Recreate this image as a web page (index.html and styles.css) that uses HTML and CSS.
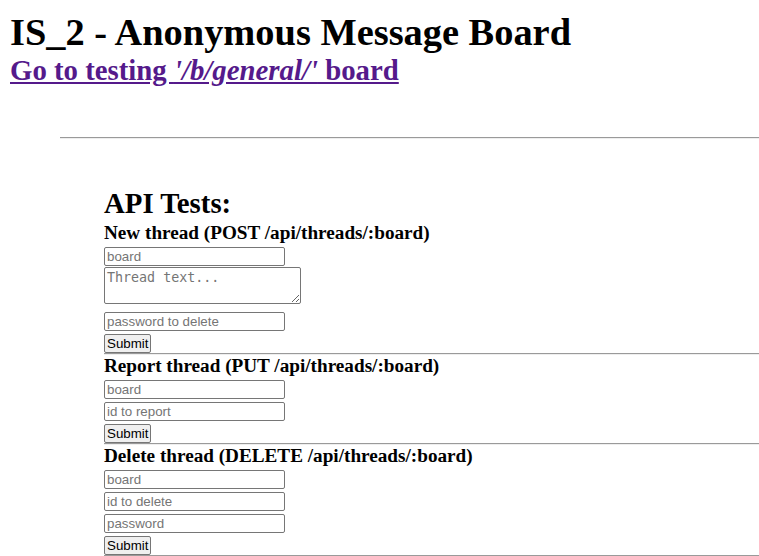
FILE: index.html
```html
<!DOCTYPE html>
<html>
<head>
<meta charset="utf-8">
<title>Anonymous Message Board</title>
<link rel="stylesheet" href="styles.css">
</head>
<body>
<header class="top">
  <h1 class="title">IS_2 - Anonymous Message Board</h1>
  <a class="board-link" href="#">Go to testing <i>'/b/general/'</i> board</a>
</header>
<hr class="divider">
<section class="tests">
  <h2 class="tests-title">API Tests:</h2>
  <h4 class="test-title">New thread (POST /api/threads/:board)</h4>
  <form class="test-form">
    <input class="field" type="text" placeholder="board">
    <textarea class="area" placeholder="Thread text..."></textarea>
    <input class="field field-gap" type="text" placeholder="password to delete">
    <input class="submit" type="submit" value="Submit">
  </form>
  <hr class="sep">
  <h4 class="test-title">Report thread (PUT /api/threads/:board)</h4>
  <form class="test-form">
    <input class="field" type="text" placeholder="board">
    <input class="field" type="text" placeholder="id to report">
    <input class="submit" type="submit" value="Submit">
  </form>
  <hr class="sep">
  <h4 class="test-title">Delete thread (DELETE /api/threads/:board)</h4>
  <form class="test-form">
    <input class="field" type="text" placeholder="board">
    <input class="field" type="text" placeholder="id to delete">
    <input class="field" type="text" placeholder="password">
    <input class="submit" type="submit" value="Submit">
  </form>
  <hr class="sep">
</section>
</body>
</html>
```
FILE: styles.css
```css
body {
  margin: 8px 0 8px 8px;
  font-family: "Liberation Serif", "Times New Roman", serif;
  color: #000;
  background: #fff;
}
.top {
  display: block;
  padding-left: 2px;
}
.title {
  margin: 2px 0 0 0;
  font-size: 38.4px;
  line-height: 44px;
  font-weight: bold;
}
.board-link {
  display: inline-block;
  font-size: 28.8px;
  line-height: 33px;
  font-weight: bold;
  color: #551a8b;
  text-decoration: underline;
}
.divider {
  margin: 50px 0 0 52px;
  border: none;
  border-top: 1px solid #9a9a9a;
  border-bottom: 1px solid #eeeeee;
  height: 0;
}
.tests {
  margin: 0 0 0 96px;
}
.tests-title {
  margin: 48px 0 2px 0;
  font-size: 28.8px;
  line-height: 33px;
  font-weight: bold;
}
.test-title {
  margin: 0;
  font-size: 19.2px;
  line-height: 22px;
  font-weight: bold;
}
.test-form {
  margin: 0;
  display: flex;
  flex-direction: column;
  align-items: flex-start;
}
.field {
  box-sizing: border-box;
  width: 181px;
  height: 19px;
  margin: 3px 0 0 0;
  padding: 1px 2px;
  border: 1px solid #767676;
  border-radius: 2px;
  font-family: "Liberation Sans", Arial, sans-serif;
  font-size: 13.33px;
}
.field::placeholder,
.area::placeholder {
  color: #757575;
}
.field-gap {
  margin-top: 8px;
}
.area {
  box-sizing: border-box;
  width: 197px;
  height: 37px;
  margin: 1px 0 0 0;
  padding: 2px;
  border: 1px solid #767676;
  border-radius: 2px;
  font-family: "DejaVu Sans Mono", "Liberation Mono", monospace;
  font-size: 13.33px;
}
.submit {
  box-sizing: border-box;
  height: 19px;
  margin: 3px 0 0 0;
  padding: 0 2px;
  border: 1px solid #767676;
  border-radius: 2px;
  background: #efefef;
  font-family: "Liberation Sans", Arial, sans-serif;
  font-size: 13.33px;
  color: #000;
}
.sep {
  margin: 0;
  border: none;
  border-top: 1px solid #9a9a9a;
  border-bottom: 1px solid #eeeeee;
  height: 0;
}
```
